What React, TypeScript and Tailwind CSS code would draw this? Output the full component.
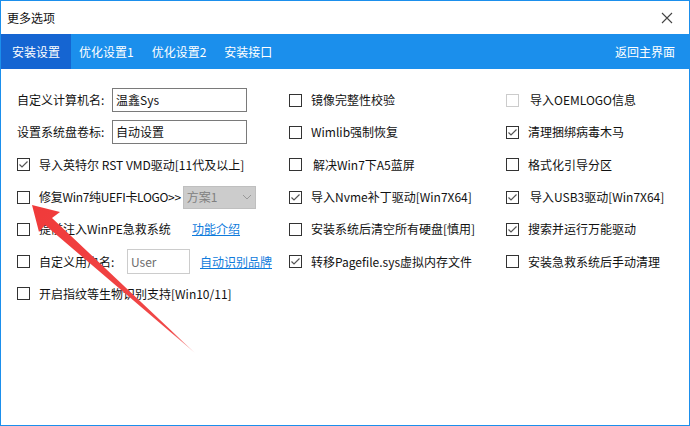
import React from 'react';

const FONT = { fontFamily: '"Noto Sans CJK SC", "Noto Sans", sans-serif' };

const CheckBox: React.FC<{ checked?: boolean; disabled?: boolean }> = ({ checked, disabled }) => (
  <span
    className={`inline-flex h-[13px] w-[13px] shrink-0 items-center justify-center border bg-white ${
      disabled ? 'border-[#cccccc]' : 'border-[#333333]'
    }`}
  >
    {checked && (
      <svg width="11" height="11" viewBox="0 0 11 11">
        <path d="M1.5 5.5 L4 8 L9.5 2.5" fill="none" stroke="#555" strokeWidth="1.2" />
      </svg>
    )}
  </span>
);

const CheckRow: React.FC<{ label: string; checked?: boolean; disabled?: boolean; children?: React.ReactNode; labelClass?: string }> = ({
  label,
  checked,
  disabled,
  children,
  labelClass,
}) => (
  <div className="flex h-[32.3px] items-center">
    <CheckBox checked={checked} disabled={disabled} />
    <span className={`ml-[9px] whitespace-nowrap text-[12px] text-[#111] ${labelClass || ''}`}>{label}</span>
    {children}
  </div>
);

const tabs = ['安装设置', '优化设置1', '优化设置2', '安装接口'];

export default function App() {
  return (
    <div style={FONT} className="relative h-[426px] w-[690px] overflow-hidden border border-[#1b8fec] bg-white">
      {/* title bar */}
      <div className="flex h-[33px] items-center justify-between bg-white pl-[6px] pr-[16px]">
        <span className="text-[12px] text-[#111]">更多选项</span>
        <svg width="12" height="12" viewBox="0 0 12 12">
          <path d="M1 1 L11 11 M11 1 L1 11" stroke="#444" strokeWidth="1.1" />
        </svg>
      </div>

      {/* tab bar */}
      <div className="flex h-[35px] items-stretch bg-[#1b8fec] text-[12px] text-white">
        {tabs.map((t, i) => (
          <div
            key={t}
            className={`flex items-center ${i === 0 ? 'bg-[#1565d2] px-[11px]' : 'px-[9px]'} ${i === 1 ? 'ml-[-1px]' : ''}`}
          >
            {t}
          </div>
        ))}
        <div className="ml-auto flex items-center pr-[14px]">返回主界面</div>
      </div>

      {/* content */}
      <div className="grid grid-cols-[272px_217px_1fr] pl-[16px] pt-[15px]">
        {/* column 1 */}
        <div className="flex flex-col">
          <div className="flex h-[32.3px] items-center">
            <span className="w-[95px] text-[12px] text-[#111]">自定义计算机名:</span>
            <div className="flex h-[24px] w-[135px] items-center border border-[#7a7a7a] px-[3px] text-[12px] text-[#111]">
              温鑫Sys
            </div>
          </div>
          <div className="flex h-[32.3px] items-center">
            <span className="w-[95px] text-[12px] text-[#111]">设置系统盘卷标:</span>
            <div className="flex h-[24px] w-[135px] items-center border border-[#7a7a7a] px-[3px] text-[12px] text-[#111]">
              自动设置
            </div>
          </div>
          <CheckRow label="导入英特尔 RST VMD驱动[11代及以上]" checked />
          <CheckRow label="修复Win7纯UEFI卡LOGO>>" labelClass="tracking-[-0.3px]">
            <div className="ml-[2px] flex h-[23px] w-[73px] items-center justify-between border border-[#bfbfbf] bg-[#cccccc] px-[3px] text-[12px] text-[#808080]">
              <span>方案1</span>
              <svg width="10" height="6" viewBox="0 0 10 6">
                <path d="M1 1 L5 5 L9 1" fill="none" stroke="#999" strokeWidth="1" />
              </svg>
            </div>
          </CheckRow>
          <CheckRow label="提前注入WinPE急救系统" labelClass="w-[153px]">
            <span className="text-[12px] text-[#0f7bdc] underline">功能介绍</span>
          </CheckRow>
          <CheckRow label="自定义用户名:" labelClass="w-[88px]">
            <div className="flex h-[25px] w-[63px] items-center border border-[#cccccc] px-[3px] text-[12px] text-[#6d6d6d]">
              User
            </div>
            <span className="ml-[10px] whitespace-nowrap text-[12px] text-[#0f7bdc] underline">自动识别品牌</span>
          </CheckRow>
          <CheckRow label="开启指纹等生物识别支持[Win10/11]" />
        </div>

        {/* column 2 */}
        <div className="flex flex-col">
          <CheckRow label="镜像完整性校验" />
          <CheckRow label="Wimlib强制恢复" />
          <CheckRow label=" 解决Win7下A5蓝屏" labelClass="pl-[2px]" />
          <CheckRow label="导入Nvme补丁驱动[Win7X64]" checked />
          <CheckRow label="安装系统后清空所有硬盘[慎用]" />
          <CheckRow label="转移Pagefile.sys虚拟内存文件" checked />
        </div>

        {/* column 3 */}
        <div className="flex flex-col">
          <CheckRow label="导入OEMLOGO信息" disabled labelClass="pl-[2px]" />
          <CheckRow label="清理捆绑病毒木马" checked />
          <CheckRow label="格式化引导分区" />
          <CheckRow label="导入USB3驱动[Win7X64]" checked labelClass="pl-[2px]" />
          <CheckRow label="搜索并运行万能驱动" checked />
          <CheckRow label="安装急救系统后手动清理" />
        </div>
      </div>

      {/* annotation arrow */}
      <svg className="pointer-events-none absolute left-[-1px] top-[-1px]" width="690" height="426" viewBox="0 0 690 426">
        <defs>
          <linearGradient id="arrowGrad" x1="32" y1="205" x2="195" y2="353" gradientUnits="userSpaceOnUse">
            <stop offset="0" stopColor="#f03a3a" />
            <stop offset="0.85" stopColor="#f04848" />
            <stop offset="1" stopColor="#f8c0c0" />
          </linearGradient>
        </defs>
        <polygon points="32,205 60,212 52,218 195,353 45,225 39,232" fill="url(#arrowGrad)" />
      </svg>
    </div>
  );
}
